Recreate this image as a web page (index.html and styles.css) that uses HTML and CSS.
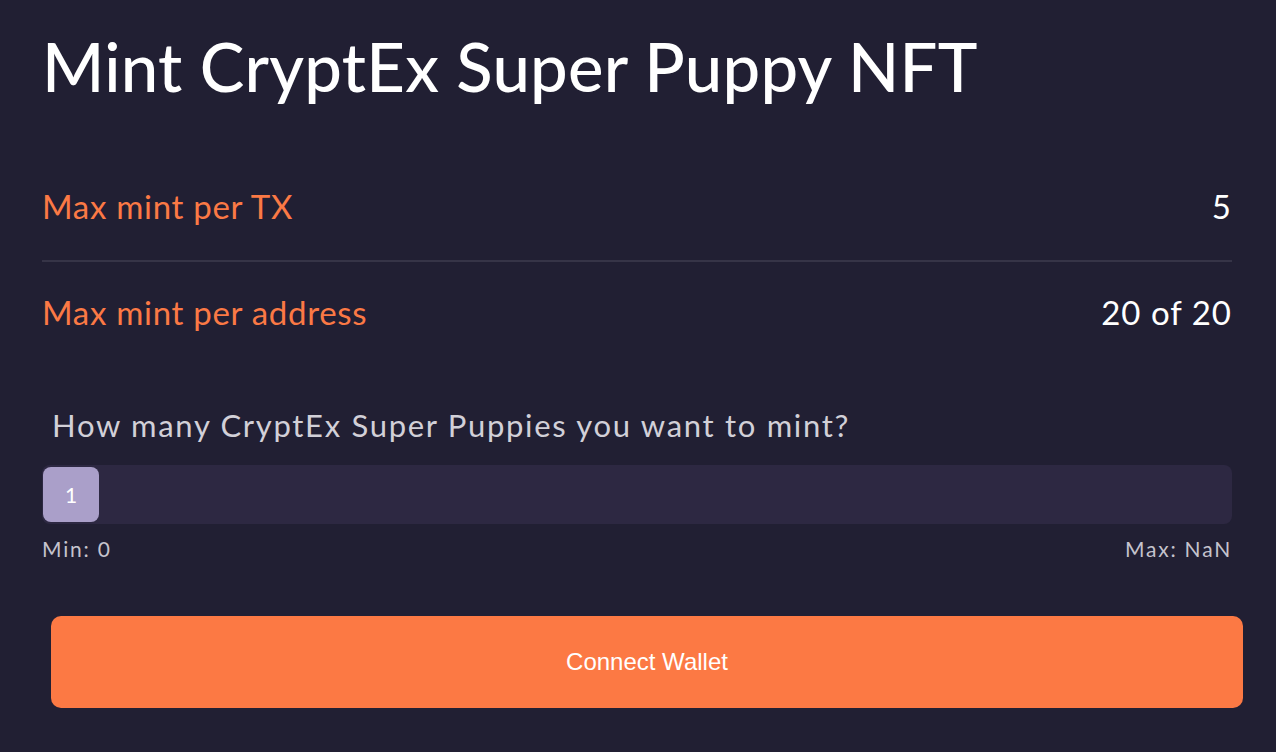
FILE: index.html
```html
<!DOCTYPE html>
<html>
<head>
<meta charset="utf-8">
<link rel="stylesheet" href="styles.css">
</head>
<body>
<main class="mint">
  <h1 class="title">Mint CryptEx Super Puppy NFT</h1>
  <section class="stats">
    <div class="stat stat-first">
      <span class="stat-label">Max mint per TX</span>
      <span class="stat-value">5</span>
    </div>
    <div class="stat stat-last">
      <span class="stat-label">Max mint per address</span>
      <span class="stat-value">20 of 20</span>
    </div>
  </section>
  <p class="question">How many CryptEx Super Puppies you want to mint?</p>
  <div class="slider">
    <div class="thumb">1</div>
  </div>
  <div class="range">
    <span>Min: 0</span>
    <span>Max: NaN</span>
  </div>
  <button class="connect">Connect Wallet</button>
</main>
</body>
</html>
```
FILE: styles.css
```css
html, body {
  margin: 0;
  padding: 0;
  background: #211f33;
  height: 100%;
}
body {
  font-family: "Lato", "Inter", sans-serif;
  color: #ffffff;
  overflow: hidden;
}
.mint {
  width: 1190px;
  padding: 0 0 0 42px;
  display: flex;
  flex-direction: column;
}
.title {
  margin: 26px 0 0 0;
  font-size: 67px;
  font-weight: 500;
  line-height: 80px;
  letter-spacing: 0.25px;
  color: #ffffff;
}
.stats {
  margin-top: 70px;
  display: flex;
  flex-direction: column;
}
.stat {
  display: flex;
  justify-content: space-between;
  font-size: 33px;
  line-height: 40px;
  letter-spacing: 0.7px;
}
.stat-first {
  height: 86px;
  padding-top: 10px;
  box-sizing: border-box;
  border-bottom: 2px solid #363447;
}
.stat-last {
  padding-top: 30px;
  height: 70px;
  box-sizing: border-box;
  align-items: flex-start;
}
.stat-label {
  color: #fb7945;
}
.stat-value {
  color: #ffffff;
  letter-spacing: 1px;
}
.question {
  margin: 73px 0 0 10px;
  font-size: 31px;
  line-height: 40px;
  letter-spacing: 1.7px;
  color: #d2d0d8;
}
.slider {
  margin-top: 20px;
  height: 59px;
  border-radius: 8px;
  background: #2d2842;
  display: flex;
  align-items: center;
  padding-left: 1px;
}
.thumb {
  width: 56px;
  height: 55px;
  border-radius: 8px;
  background: #aa9fc9;
  color: #ffffff;
  font-size: 21px;
  display: flex;
  align-items: center;
  justify-content: center;
}
.range {
  display: flex;
  justify-content: space-between;
  margin-top: 12px;
  font-size: 21px;
  line-height: 26px;
  letter-spacing: 1.8px;
  color: #c5c3cd;
}
.connect {
  margin: 54px -11px 0 9px;
  height: 92px;
  border: none;
  border-radius: 10px;
  background: #fc7944;
  color: #ffffff;
  font-family: "Liberation Sans", Arial, sans-serif;
  font-size: 24px;
}
```
